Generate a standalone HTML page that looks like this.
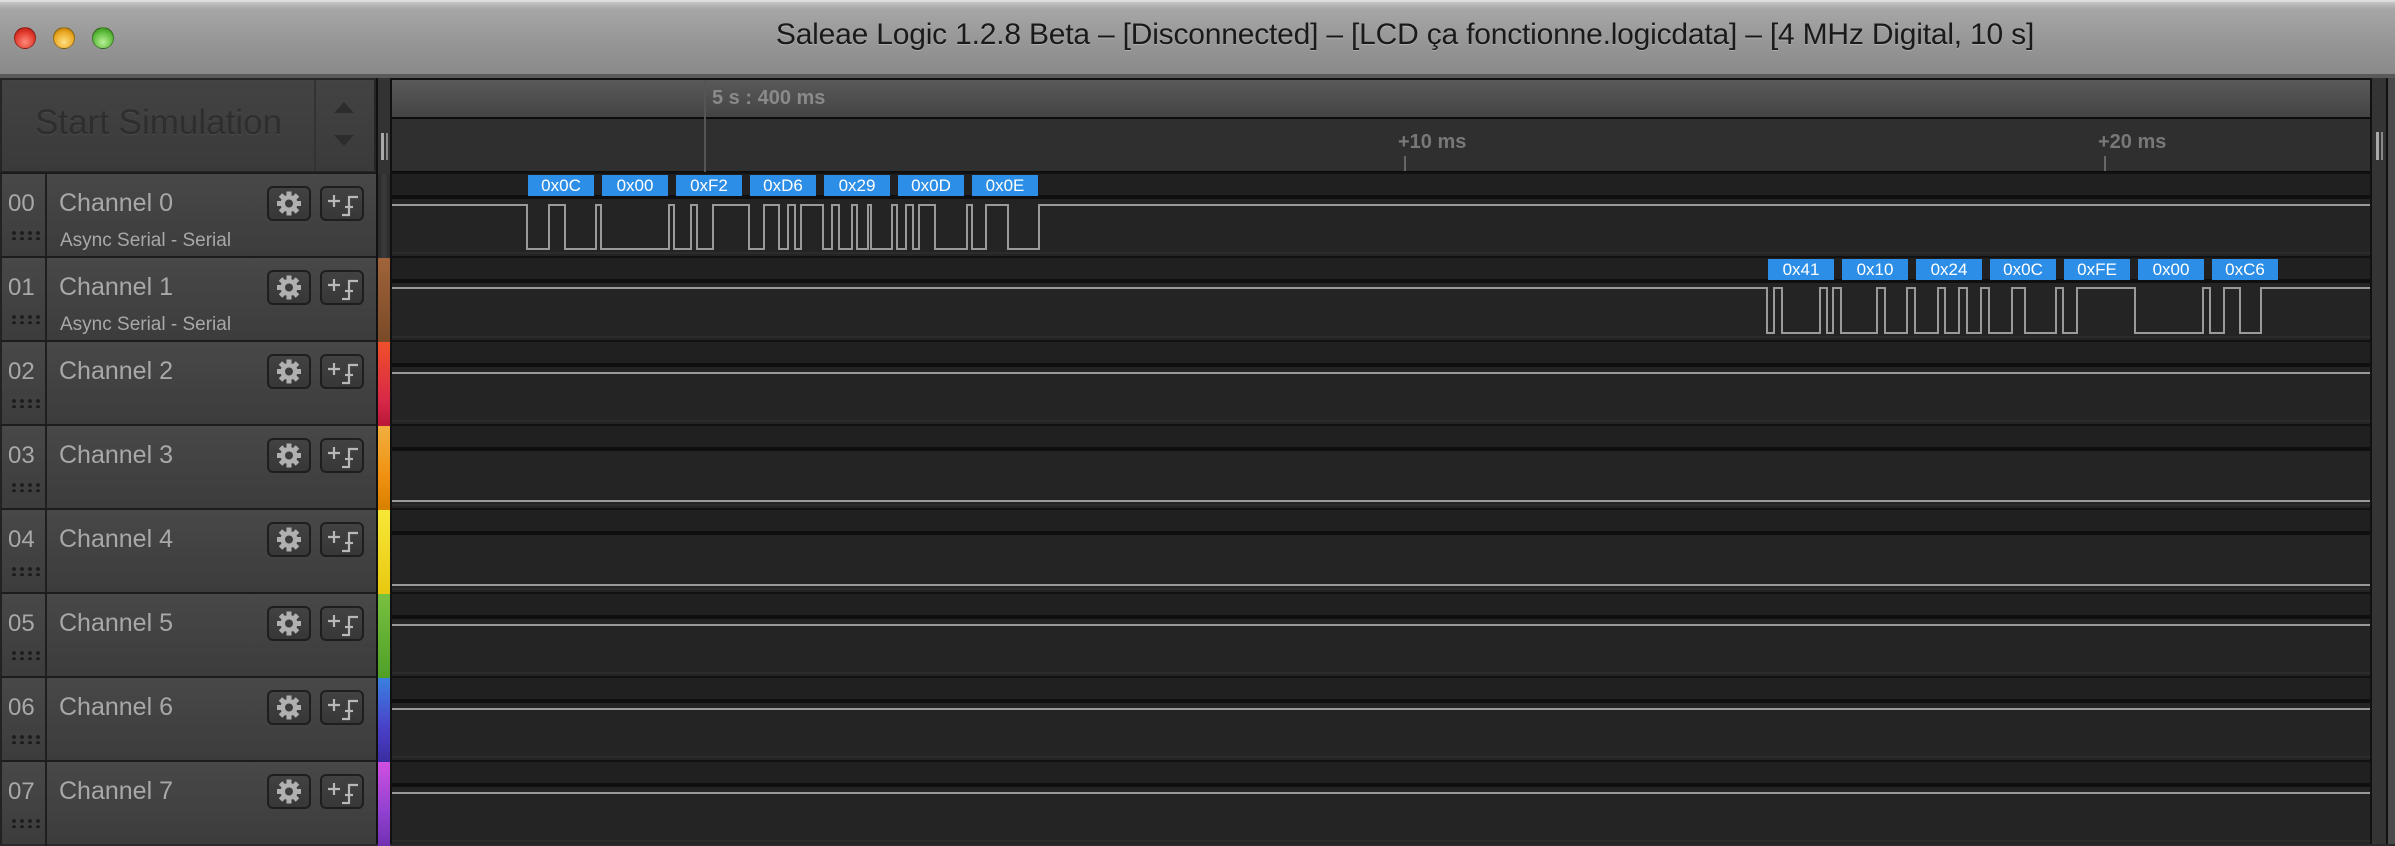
<!DOCTYPE html>
<html><head><meta charset="utf-8"><style>
*{margin:0;padding:0;box-sizing:border-box}
body{width:2395px;height:844px;background:#2a2a2a;position:relative;overflow:hidden;font-family:"Liberation Sans","DejaVu Sans",sans-serif}
.abs{position:absolute}
#title{left:0;top:0;width:2395px;height:74px;background:linear-gradient(#c4c4c4 0,#a6a6a6 10%,#959595 60%,#8a8a8a 100%);border-top:2px solid #ddd}
.tl{position:absolute;top:25px;width:22px;height:22px;border-radius:50%;border:1px solid rgba(0,0,0,.35)}
#ttext{left:0;width:2810px;top:16px;text-align:center;font-size:30px;color:#1a1a1a;letter-spacing:-0.2px;white-space:nowrap;text-shadow:0 1px 0 rgba(255,255,255,.25)}
.row{position:absolute;left:0;width:376px;height:84px;background:linear-gradient(#484848,#3c3c3c);border-top:2px solid #1c1c1c;border-left:2px solid #222}
.num{position:absolute;left:6px;top:16px;font-size:24px;color:#a8a8a8}
.ncol{position:absolute;left:43px;top:0;width:2px;height:84px;background:#1e1e1e}
.name{position:absolute;left:57px;top:15px;font-size:25px;color:#a8a8a8}
.sub{position:absolute;left:58px;top:56px;font-size:19px;color:#a8a8a8}
.dots{position:absolute;left:8px;top:56px;width:32px;height:10px;background-image:radial-gradient(circle,#1c1c1c 1.8px,transparent 2px);background-size:8px 6px}
.btn{position:absolute;top:12px;width:44px;height:35px;border:2px solid #1e1e1e;border-radius:6px;background:linear-gradient(#424242,#373737)}
.cb{position:absolute;left:378px;width:12px;height:84px}
.lab{position:absolute;height:21px;width:66px;background:#2c8ee6;color:#fff;font-size:17px;text-align:center;line-height:21px}
</style></head><body>
<div id="title" class="abs">
<div class="tl" style="left:14px;background:radial-gradient(circle at 50% 70%,#ff8a7a,#e0362a 60%,#a01810)"></div>
<div class="tl" style="left:53px;background:radial-gradient(circle at 50% 70%,#ffe080,#e8a520 60%,#a06a00)"></div>
<div class="tl" style="left:92px;background:radial-gradient(circle at 50% 70%,#b8f098,#5cba3a 60%,#2c7a10)"></div>
<div id="ttext" class="abs">Saleae Logic 1.2.8 Beta – [Disconnected] – [LCD ça fonctionne.logicdata] – [4 MHz Digital, 10 s]</div>
</div>
<div class="abs" style="left:0;top:74px;width:2395px;height:4px;background:#5a5a5a"></div>
<!-- start sim -->
<div class="abs" style="left:0;top:78px;width:376px;height:95px;background:linear-gradient(#434343,#3a3a3a);border:2px solid #262626"></div>
<div class="abs" style="left:314px;top:80px;width:2px;height:91px;background:#333"></div>
<div class="abs" style="left:35px;top:103px;font-size:35px;color:#2e2e2e;text-shadow:0 1px 0 #4a4a4a">Start Simulation</div>
<div class="abs" style="left:334px;top:102px;width:0;height:0;border-left:10px solid transparent;border-right:10px solid transparent;border-bottom:11px solid #2c2c2c"></div>
<div class="abs" style="left:334px;top:135px;width:0;height:0;border-left:10px solid transparent;border-right:10px solid transparent;border-top:11px solid #2c2c2c"></div>
<!-- separator col -->
<div class="abs" style="left:376px;top:78px;width:16px;height:766px;background:#333;border-left:2px solid #111;border-right:2px solid #111"></div>
<div class="abs" style="left:381px;top:133px;width:3px;height:27px;background:#aaa"></div>
<div class="abs" style="left:386px;top:133px;width:2px;height:27px;background:#888"></div>
<!-- rulers -->
<div class="abs" style="left:392px;top:78px;width:1980px;height:41px;background:linear-gradient(#595959,#444);border-top:2px solid #111;border-bottom:2px solid #0c0c0c"></div>
<div class="abs" style="left:392px;top:119px;width:1980px;height:54px;background:#2f2f2f;border-bottom:2px solid #0c0c0c"></div>
<div class="abs" style="left:704px;top:80px;width:2px;height:92px;background:#555"></div>
<div class="abs" style="left:712px;top:87px;font-size:20px;font-weight:bold;color:#8a8a8a">5 s : 400 ms</div>
<div class="abs" style="left:1398px;top:131px;font-size:20px;font-weight:bold;color:#787878">+10 ms</div>
<div class="abs" style="left:1404px;top:156px;width:2px;height:15px;background:#666"></div>
<div class="abs" style="left:2098px;top:131px;font-size:20px;font-weight:bold;color:#787878">+20 ms</div>
<div class="abs" style="left:2104px;top:156px;width:2px;height:15px;background:#666"></div>
<!-- right scroll col -->
<div class="abs" style="left:2370px;top:78px;width:18px;height:766px;background:#343434;border-left:2px solid #111;border-right:2px solid #111"></div>
<div class="abs" style="left:2388px;top:78px;width:7px;height:766px;background:#4a4a4a"></div>
<div class="abs" style="left:2376px;top:132px;width:3px;height:28px;background:#aaa"></div>
<div class="abs" style="left:2381px;top:132px;width:2px;height:28px;background:#888"></div>

<svg class="abs" style="left:0;top:0" width="2395" height="844">
<defs>
<g id="wrow">
<rect x="392" y="0" width="1978" height="84" fill="#242424"/>
<rect x="392" y="0" width="1978" height="2" fill="#111"/>
<rect x="392" y="2" width="1978" height="22" fill="#202020"/>
<rect x="392" y="23" width="1978" height="4" fill="#0f0f0f"/>
<rect x="392" y="80" width="1978" height="2" fill="#2c2c2c"/>
</g>
</defs>
<use href="#wrow" y="172"/><use href="#wrow" y="256"/><use href="#wrow" y="340"/><use href="#wrow" y="424"/>
<use href="#wrow" y="508"/><use href="#wrow" y="592"/><use href="#wrow" y="676"/><use href="#wrow" y="760"/>
<g fill="none" stroke="#9a9a9a" stroke-width="2">
<path id="w0" d=""/>
<path id="w1" d=""/>
<path d="M392 373H2370"/>
<path d="M392 501H2370"/>
<path d="M392 585H2370"/>
<path d="M392 625H2370"/>
<path d="M392 709H2370"/>
<path d="M392 793H2370"/>
</g>
</svg>
<script>
function wave(id,t,hy,ly){var d="M392 "+hy,h=true;for(var i=0;i<t.length;i++){d+="H"+t[i]+"V"+(h?ly:hy);h=!h}d+="H2370";document.getElementById(id).setAttribute("d",d)}
wave("w0",[527,549,565,596,601,669,674,691,697,713,749,764,779,788,795,801,823,832,839,852,857,868,871,892,897,906,913,919,935,967,972,986,1008,1039],205,249);
wave("w1",[1767,1774,1782,1820,1827,1833,1841,1877,1885,1907,1915,1938,1945,1959,1967,1981,1989,2012,2025,2056,2063,2077,2135,2203,2210,2224,2240,2261],288,333);
</script>
<!-- labels -->
<div class="lab" style="left:528px;top:175px">0x0C</div>
<div class="lab" style="left:602px;top:175px">0x00</div>
<div class="lab" style="left:676px;top:175px">0xF2</div>
<div class="lab" style="left:750px;top:175px">0xD6</div>
<div class="lab" style="left:824px;top:175px">0x29</div>
<div class="lab" style="left:898px;top:175px">0x0D</div>
<div class="lab" style="left:972px;top:175px">0x0E</div>
<div class="lab" style="left:1768px;top:259px">0x41</div>
<div class="lab" style="left:1842px;top:259px">0x10</div>
<div class="lab" style="left:1916px;top:259px">0x24</div>
<div class="lab" style="left:1990px;top:259px">0x0C</div>
<div class="lab" style="left:2064px;top:259px">0xFE</div>
<div class="lab" style="left:2138px;top:259px">0x00</div>
<div class="lab" style="left:2212px;top:259px">0xC6</div>

<!-- channel rows -->
<div id="rows"></div>
<script>
var cols=["linear-gradient(90deg,#2a2a2a,#3a3a3a,#2a2a2a)","linear-gradient(#a0643a,#7a4a28)","linear-gradient(#f0502a,#d82848 70%,#b81838)","linear-gradient(#f0b040,#f09010 60%,#d88000)","linear-gradient(#f8e838,#e8c810)","linear-gradient(#78c040,#50a028)","linear-gradient(#3a80e0,#4a40c8 60%,#3a2ca0)","linear-gradient(#d050e0,#9040d0 60%,#7030b0)"];
var gear='<svg width="44" height="35" viewBox="0 0 44 35"><g transform="translate(20,15.5)" fill="#b0b0b0"><circle r="8.5"/><g><rect x="-2.5" y="-12" width="5" height="24"/><rect x="-12" y="-2.5" width="24" height="5"/><rect x="-2.5" y="-12" width="5" height="24" transform="rotate(45)"/><rect x="-2.5" y="-12" width="5" height="24" transform="rotate(-45)"/></g><circle r="4" fill="#3c3c3c"/></g></svg>';
var edge='<svg width="44" height="35" viewBox="0 0 44 35"><g stroke="#b8b8b8" stroke-width="2.2" fill="none"><path d="M6 13H18M12 7V19"/><path d="M20 27H27V9H36"/><path d="M23 19H31"/></g></svg>';
var h="";
for(var i=0;i<8;i++){var y=172+i*84;
h+='<div class="row" style="top:'+y+'px"><div class="ncol"></div><div class="num">0'+i+'</div><div class="dots"></div><div class="name">Channel '+i+'</div>'+(i<2?'<div class="sub">Async Serial - Serial</div>':'')+
'<div class="btn" style="left:265px">'+gear+'</div><div class="btn" style="left:318px">'+edge+'</div></div>'+
'<div class="cb" style="top:'+(y+2)+'px;background:'+cols[i]+'"></div>';}
document.getElementById("rows").innerHTML=h;
</script>
</body></html>
